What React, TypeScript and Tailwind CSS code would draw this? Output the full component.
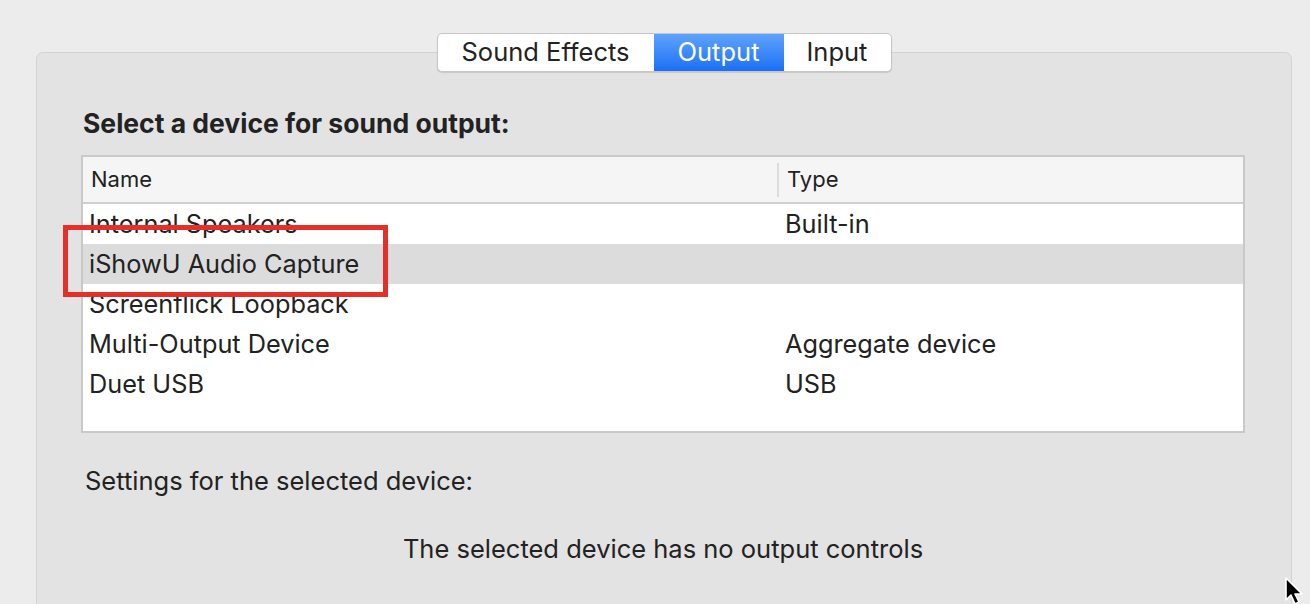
import React from "react";

const rows = [
  { name: "Internal Speakers", type: "Built-in" },
  { name: "iShowU Audio Capture", type: "", selected: true },
  { name: "Screenflick Loopback", type: "" },
  { name: "Multi-Output Device", type: "Aggregate device" },
  { name: "Duet USB", type: "USB" },
];

const Cursor = () => (
  <svg width="26" height="30" viewBox="0 0 26 30" className="absolute left-[1284px] top-[577px]">
    <path d="M2 1 L2 23 L7 18 L11 27 L15 25 L11 17 L18 17 Z" fill="#000" stroke="#fff" strokeWidth="1.6" strokeLinejoin="round" />
  </svg>
);

export default function App() {
  return (
    <div
      className="relative w-full h-[604px] overflow-hidden bg-[#ececec] text-[#222]"
      style={{ fontFamily: "Inter, 'Liberation Sans', sans-serif" }}
    >
      <div className="flex flex-col pt-[33px] pl-[36px] pr-[18px]">
        {/* tabs */}
        <div className="relative z-10 mx-auto flex h-[39px] rounded-[5px] border border-[#c6c6c6] bg-white text-[25.5px] shadow-[0_1px_1px_rgba(0,0,0,0.12)] overflow-hidden">
          <div className="flex w-[216px] items-center justify-center">Sound Effects</div>
          <div className="flex w-[130px] items-center justify-center bg-gradient-to-b from-[#5ea2fb] to-[#1a6ff6] text-white">
            Output
          </div>
          <div className="flex w-[107px] items-center justify-center">Input</div>
        </div>

        {/* panel */}
        <div className="-mt-[20px] h-[600px] rounded-t-[7px] border border-[#d3d3d3] bg-[#e3e3e3] pl-[44px] pr-[46px] pt-[56px]">
          <h2 className="text-[26.5px] font-bold leading-[28px] pl-[2px]">Select a device for sound output:</h2>

          <div className="relative mt-[18px] h-[278px] border-2 border-[#c9c9c9] bg-white">
            <div className="flex h-[47px] items-center border-b-2 border-[#cfcfcf] bg-[#f5f5f5] text-[22px]">
              <div className="w-[694px] pl-[8px]">Name</div>
              <div className="h-[34px] w-[2px] bg-[#dcdcdc]" />
              <div className="pl-[8px]">Type</div>
            </div>
            {rows.map((r) => (
              <div
                key={r.name}
                className={`flex h-[40px] items-center text-[25.3px] ${r.selected ? "bg-[#dcdcdc]" : ""}`}
              >
                <div className="w-[702px] pl-[6px]">{r.name}</div>
                <div>{r.type}</div>
              </div>
            ))}
          </div>

          <p className="mt-[32px] pl-[4px] text-[25.5px] leading-[32px]">Settings for the selected device:</p>
          <p className="mt-[36px] text-center text-[25.5px] leading-[32px]">The selected device has no output controls</p>
        </div>
      </div>

      {/* annotation */}
      <div className="absolute left-[63px] top-[225px] h-[72px] w-[325px] border-[5px] border-[#e5302a]" />
      <Cursor />
    </div>
  );
}
